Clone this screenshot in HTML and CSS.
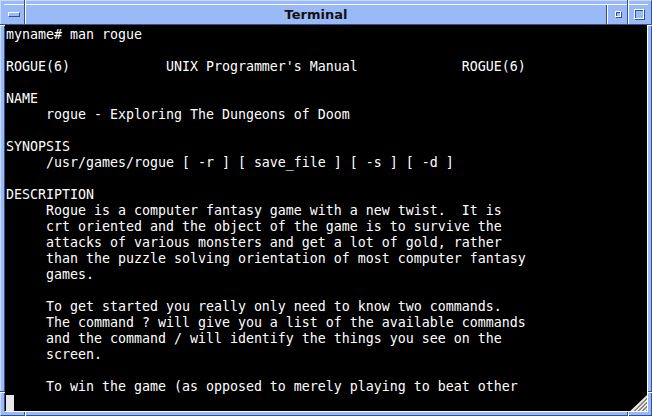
FILE: index.html
```html
<!DOCTYPE html>
<html>
<head>
<meta charset="utf-8">
<title>Terminal</title>
<link rel="stylesheet" href="styles.css">
</head>
<body>
<div class="window">
  <div class="titlebar">
    <div class="tb-cell tb-menu"><span class="menu-icon"></span></div>
    <div class="tb-title">Terminal</div>
    <div class="tb-cell tb-min"><span class="min-icon"></span></div>
    <div class="tb-cell tb-max"><span class="max-icon"></span></div>
  </div>
  <div class="term">
<pre class="screen">myname# man rogue

ROGUE(6)            UNIX Programmer's Manual             ROGUE(6)

NAME
     rogue - Exploring The Dungeons of Doom

SYNOPSIS
     /usr/games/rogue [ -r ] [ save_file ] [ -s ] [ -d ]

DESCRIPTION
     Rogue is a computer fantasy game with a new twist.  It is
     crt oriented and the object of the game is to survive the
     attacks of various monsters and get a lot of gold, rather
     than the puzzle solving orientation of most computer fantasy
     games.

     To get started you really only need to know two commands.
     The command ? will give you a list of the available commands
     and the command / will identify the things you see on the
     screen.

     To win the game (as opposed to merely playing to beat other
<span class="cursor"></span></pre>
    <div class="grip"></div>
  </div>
  <span class="notch notch-tl-v"></span>
  <span class="notch notch-tr-v"></span>
  <span class="notch notch-bl-v"></span>
  <span class="notch notch-br-v"></span>
  <span class="notch notch-tl-h"></span>
  <span class="notch notch-tr-h"></span>
  <span class="notch notch-bl-h"></span>
  <span class="notch notch-br-h"></span>
</div>
</body>
</html>
```
FILE: styles.css
```css
html, body {
  margin: 0;
  padding: 0;
  background: #000;
}

.window {
  position: relative;
  width: 652px;
  height: 416px;
  box-sizing: border-box;
  background: #99b9f7;
  border-top: 1px solid #c9dafc;
  border-left: 1px solid #c9dafc;
  border-right: 1px solid #33508f;
  border-bottom: 1px solid #33508f;
  padding: 3px;
  display: flex;
  flex-direction: column;
}

.titlebar {
  height: 21px;
  box-sizing: border-box;
  display: flex;
  border-top: 1px solid #ffffff;
  border-bottom: 1px solid #33508f;
}

.tb-cell {
  display: flex;
  align-items: center;
  justify-content: center;
  box-sizing: border-box;
}

.tb-menu {
  width: 21px;
  border-right: 1px solid #33508f;
}

.tb-title {
  flex: 1;
  border-left: 1px solid #ffffff;
  border-right: 1px solid #33508f;
  text-align: center;
  font-family: "DejaVu Sans", Verdana, sans-serif;
  font-weight: bold;
  font-size: 13px;
  line-height: 19px;
  color: #111111;
}

.tb-min {
  width: 21px;
  border-left: 1px solid #ffffff;
  border-right: 1px solid #33508f;
}

.tb-max {
  width: 20px;
  border-left: 1px solid #ffffff;
}

.menu-icon {
  display: block;
  width: 12px;
  height: 5px;
  box-sizing: border-box;
  border-top: 1px solid #ffffff;
  border-left: 1px solid #ffffff;
  border-right: 1px solid #33508f;
  border-bottom: 1px solid #33508f;
  margin-top: -1px;
}

.min-icon {
  display: block;
  width: 6px;
  height: 6px;
  box-sizing: border-box;
  border: 1px solid #ffffff;
  box-shadow: 1px 1px 0 #33508f, inset 1px 1px 0 #33508f;
  margin-top: -1px;
}

.max-icon {
  display: block;
  width: 10px;
  height: 10px;
  box-sizing: border-box;
  border: 1px solid #ffffff;
  box-shadow: 1px 1px 0 #33508f, inset 1px 1px 0 #33508f;
  margin-top: -1px;
}

.term {
  position: relative;
  height: 387px;
  box-sizing: border-box;
  background: #000;
  border-left: 1px solid #33508f;
  border-right: 1px solid #ffffff;
  border-bottom: 1px solid #ffffff;
  padding: 2px 1px 0 1px;
}

.screen {
  margin: 0;
  font-family: "DejaVu Sans Mono", monospace;
  font-size: 13.29px;
  line-height: 16px;
  color: #ffffff;
  white-space: pre;
}

.cursor {
  display: inline-block;
  width: 8px;
  height: 16px;
  vertical-align: top;
  background: #e8e8e8;
}

.grip {
  position: absolute;
  right: 0;
  bottom: 0;
  width: 17px;
  height: 16px;
  clip-path: polygon(100% 0, 100% 100%, 0 100%);
  background: repeating-linear-gradient(135deg, #e4e2da 0px, #e4e2da 1.5px, #8c8a84 1.5px, #8c8a84 3px);
}

.notch {
  position: absolute;
  display: block;
}

.notch-tl-v, .notch-bl-v, .notch-tr-v, .notch-br-v {
  width: 1px;
  border-right: 1px solid #ffffff;
  background: #33508f;
}

.notch-tl-v { left: 23px; top: -1px; height: 5px; }
.notch-tr-v { left: 626px; top: -1px; height: 5px; }
.notch-bl-v { left: 23px; bottom: -1px; height: 4px; }
.notch-br-v { left: 626px; bottom: -1px; height: 4px; }

.notch-tl-h, .notch-tr-h, .notch-bl-h, .notch-br-h {
  height: 1px;
  border-bottom: 1px solid #ffffff;
  background: #33508f;
}

.notch-tl-h { left: -1px; top: 23px; width: 5px; }
.notch-tr-h { right: -1px; top: 23px; width: 4px; }
.notch-bl-h { left: -1px; top: 390px; width: 5px; }
.notch-br-h { right: -1px; top: 390px; width: 4px; }
```
